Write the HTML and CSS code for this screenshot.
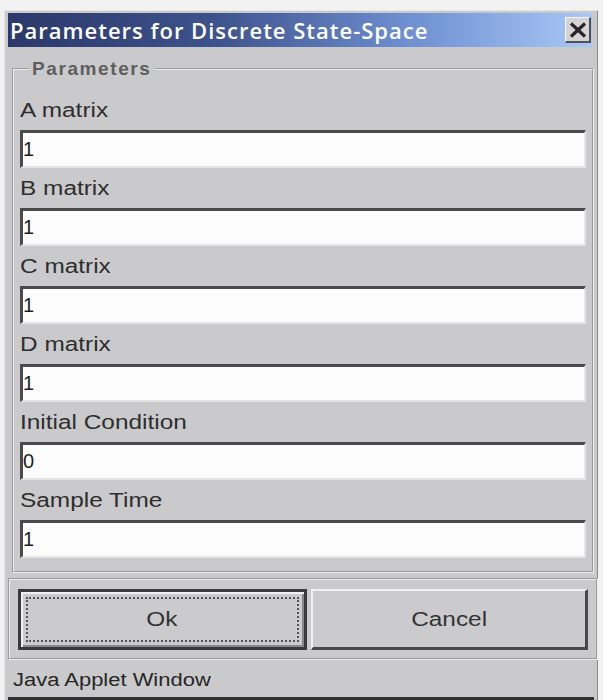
FILE: index.html
```html
<!DOCTYPE html>
<html>
<head>
<meta charset="utf-8">
<link rel="stylesheet" href="styles.css">
</head>
<body>
<div class="window">
  <div class="titlebar">
    <span class="title">Parameters for Discrete State-Space</span>
    <span class="close">
      <svg width="18" height="16" viewBox="0 0 18 16"><path d="M2 1.5 L16 14.5 M16 1.5 L2 14.5" stroke="#262626" stroke-width="3.2" fill="none"/></svg>
    </span>
  </div>
  <fieldset class="group">
    <legend class="group-title">Parameters</legend>
    <div class="field"><div class="label"><span class="wide">A matrix</span></div><div class="input">1</div></div>
    <div class="field"><div class="label"><span class="wide">B matrix</span></div><div class="input">1</div></div>
    <div class="field"><div class="label"><span class="wide">C matrix</span></div><div class="input">1</div></div>
    <div class="field"><div class="label"><span class="wide">D matrix</span></div><div class="input">1</div></div>
    <div class="field"><div class="label"><span class="wide">Initial Condition</span></div><div class="input">0</div></div>
    <div class="field"><div class="label"><span class="wide">Sample Time</span></div><div class="input">1</div></div>
  </fieldset>
  <div class="buttons">
    <div class="btn btn-default"><span class="focus"><span class="wide center">Ok</span></span></div>
    <div class="btn"><span class="wide center">Cancel</span></div>
  </div>
  <div class="status"><span class="wide">Java Applet Window</span></div>
</div>
</body>
</html>
```
FILE: styles.css
```css
html, body {
  margin: 0;
  padding: 0;
  background: #f2f2f2;
}
body {
  width: 603px;
  height: 700px;
  overflow: hidden;
  font-family: "Liberation Sans", Arial, sans-serif;
}
/* the dialog renders its sans text horizontally widened */
.wide {
  display: inline-block;
  transform: scaleX(1.22);
  transform-origin: left center;
}
.wide.center {
  transform-origin: center center;
}
.window {
  box-sizing: border-box;
  margin: 10px 0 0 4px;
  width: 594px;
  height: 690px;
  background: #cacacc;
  border-top: 1px solid #e6e6e6;
  border-left: 1px solid #e6e6e6;
  border-right: 1px solid #8a8a8a;
  padding: 2px 3px 0 3px;
  display: flex;
  flex-direction: column;
}
.titlebar {
  height: 34px;
  margin-right: 2px;
  background: linear-gradient(to right, #2b386a 0%, #3d528c 35%, #6d8ed0 68%, #a9c8f6 100%);
  display: flex;
  align-items: center;
  justify-content: space-between;
  padding: 0 1px 0 2px;
}
.title {
  color: #ffffff;
  font-family: "Open Sans", "DejaVu Sans", sans-serif;
  font-weight: 600;
  font-size: 22px;
  letter-spacing: 1px;
  white-space: nowrap;
}
.close {
  width: 26px;
  height: 26px;
  box-sizing: border-box;
  background: #d4d4d6;
  border-top: 1px solid #f6f6f6;
  border-left: 1px solid #f6f6f6;
  border-right: 2px solid #505050;
  border-bottom: 2px solid #505050;
  display: flex;
  align-items: center;
  justify-content: center;
}
.group {
  margin: 11px 0 0 4px;
  padding: 10px 6px 13px 6px;
  border: 2px groove #eeeeee;
  min-width: 0;
}
.group-title {
  padding: 0 3px;
  margin-left: 9px;
  line-height: 22px;
  font-size: 19px;
  font-weight: bold;
  letter-spacing: 1.6px;
  color: #5e5e5e;
}
.field {
  display: flex;
  flex-direction: column;
}
.label {
  height: 40px;
  line-height: 40px;
  font-size: 20px;
  color: #2e2e2e;
}
.input {
  box-sizing: border-box;
  height: 38px;
  background: #fcfcfc;
  border-top: 3px solid #4a4a4a;
  border-left: 3px solid #4a4a4a;
  border-right: 2px solid #e4e4e4;
  border-bottom: 2px solid #e4e4e4;
  font-size: 20px;
  line-height: 32px;
  color: #1e1e1e;
}
.buttons {
  margin: 5px -4px 0 0;
  border: 2px groove #eeeeee;
  padding: 9px 8px 8px 8px;
  display: flex;
  gap: 4px;
}
.btn {
  box-sizing: border-box;
  flex: 1;
  height: 61px;
  background: #cbcbcd;
  border-top: 2px solid #f0f0f0;
  border-left: 2px solid #f0f0f0;
  border-right: 3px solid #484848;
  border-bottom: 3px solid #484848;
  display: flex;
  align-items: center;
  justify-content: center;
  font-size: 20px;
  color: #333333;
}
.btn-default {
  border: 3px solid #3a3a3a;
  box-shadow: inset 2px 2px 0 #f0f0f0, inset -2px -2px 0 #8a8a8a;
  padding: 5px;
}
.focus {
  flex: 1;
  align-self: stretch;
  display: flex;
  align-items: center;
  justify-content: center;
  border: 2px dotted #555555;
}
.status {
  flex: 1;
  font-size: 18px;
  color: #262626;
  padding: 10px 0 0 5px;
  border-bottom: 3px solid #303030;
}
```
